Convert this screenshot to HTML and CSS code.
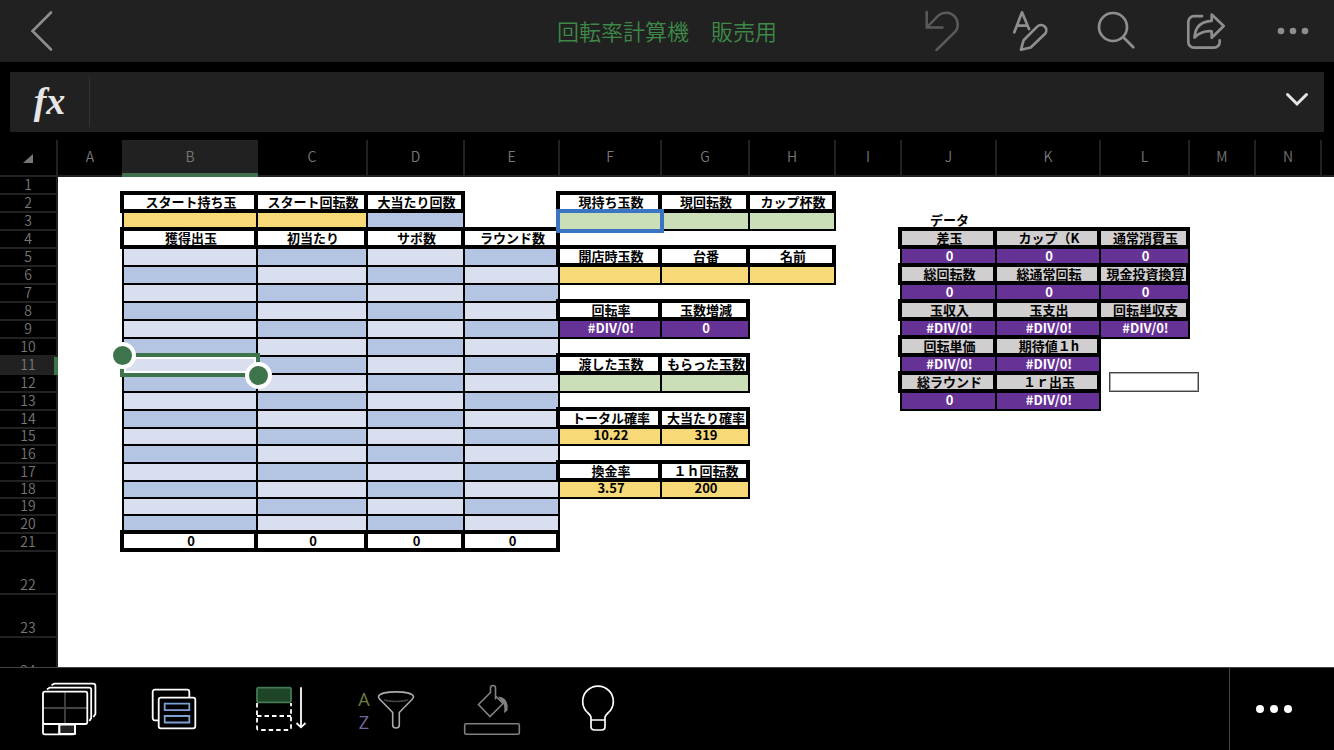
FILE: index.html
```html
<!DOCTYPE html>
<html lang="ja">
<head>
    <meta charset="UTF-8">
    <meta name="viewport" content="width=device-width, initial-scale=1.0">
    <title>回転率計算機　販売用</title>
    <link rel="stylesheet" href="styles.css">
</head>
<body>
    <header class="topbar">
        <button class="icon-btn back" aria-label="戻る">
            <svg width="44" height="44" fill="none" stroke="currentColor" stroke-width="2.6" stroke-linecap="round"><path d="M32 3.5L13.5 22L32 40.5"/></svg>
        </button>
        <h1>回転率計算機　販売用</h1>
        <nav class="actions">
            <button class="icon-btn" aria-label="元に戻す" disabled>
                <svg width="44" height="44" fill="none" stroke="currentColor" stroke-width="2.5" stroke-linecap="round"><path d="M7.7 3v15.5h15.8M7.7 18.5L19.5 6.4A11.75 11.75 0 0 1 36 23L17.5 41"/></svg>
            </button>
            <button class="icon-btn" aria-label="書式">
                <svg width="44" height="44" fill="none" stroke="currentColor" stroke-width="2.7" stroke-linecap="round" stroke-linejoin="round"><path d="M7.3 23.3L15 3.3L22 20M10.3 16.7h9.5M14 40.7L16.6 31.2L30.2 17.6a5.2 5.2 0 0 1 7.6 7.4L23.7 38.5z"/></svg>
            </button>
            <button class="icon-btn" aria-label="検索">
                <svg width="44" height="44" fill="none" stroke="currentColor" stroke-width="2.7" stroke-linecap="round"><circle cx="18" cy="18" r="14"/><path d="M28.3 28.3l10 10"/></svg>
            </button>
            <button class="icon-btn" aria-label="共有">
                <svg width="44" height="44" fill="none" stroke="currentColor" stroke-width="2.7" stroke-linecap="round" stroke-linejoin="round"><path d="M19 7.2h-8a5.7 5.7 0 0 0-5.7 5.7v20a5.7 5.7 0 0 0 5.7 5.7h20a5.7 5.7 0 0 0 5.7-5.7v-1.5M28.7 5.5L40.7 17L28.7 28.7V22.3q-9.7-1-17.2 6.2q1-16 17.2-16.7z"/></svg>
            </button>
            <button class="icon-btn" aria-label="その他">
                <svg width="44" height="44" fill="currentColor"><circle cx="10" cy="22" r="3.3"/><circle cx="22" cy="22" r="3.3"/><circle cx="34" cy="22" r="3.3"/></svg>
            </button>
        </nav>
    </header>

    <div class="formula">
        <label for="formula-input">fx</label>
        <input type="text" id="formula-input">
        <button class="icon-btn" aria-label="展開">
            <svg width="44" height="44" fill="none" stroke="currentColor" stroke-width="3" stroke-linecap="round"><path d="M12.500 14.500l9.500 9.500 9.500-9.500"/></svg>
        </button>
    </div>

    <main class="sheet">
        <table>
            <colgroup>
                <col class="w-head"><col class="w-a"><col class="w-b"><col class="w-c"><col class="w-d"><col class="w-e"><col class="w-f"><col class="w-g"><col class="w-h"><col class="w-i"><col class="w-j"><col class="w-k"><col class="w-l"><col class="w-m"><col class="w-n"><col>
            </colgroup>
            <thead>
                <tr>
                    <th class="corner"><svg width="10" height="9" fill="currentColor"><path d="M10 0v9H0z"/></svg></th>
                    <th>A</th><th class="active">B</th><th>C</th><th>D</th><th>E</th><th>F</th><th>G</th><th>H</th><th>I</th><th>J</th><th>K</th><th>L</th><th>M</th><th>N</th><th></th>
                </tr>
            </thead>
            <tbody>
                <tr><th>1</th><td colspan="15"></td></tr>
                <tr><th>2</th><td></td>
                    <td class="label">スタート持ち玉</td><td class="label">スタート回転数</td><td class="label">大当たり回数</td><td></td>
                    <td class="label">現持ち玉数</td><td class="label">現回転数</td><td class="label">カップ杯数</td><td colspan="7"></td></tr>
                <tr><th>3</th><td></td>
                    <td class="cell yellow"></td><td class="cell yellow"></td><td class="cell log"></td><td></td>
                    <td class="cell green"><div class="cursor"></div></td><td class="cell green"></td><td class="cell green"></td><td></td>
                    <td>データ</td><td colspan="5"></td></tr>
                <tr><th>4</th><td></td>
                    <td class="label">獲得出玉</td><td class="label">初当たり</td><td class="label">サポ数</td><td class="label">ラウンド数</td><td colspan="4"></td>
                    <td class="label gray">差玉</td><td class="label gray">カップ（K</td><td class="label gray">通常消費玉</td><td colspan="3"></td></tr>
                <tr><th>5</th><td></td>
                    <td class="cell log"></td><td class="cell log"></td><td class="cell log"></td><td class="cell log"></td>
                    <td class="label">開店時玉数</td><td class="label">台番</td><td class="label">名前</td><td></td>
                    <td class="cell purple">0</td><td class="cell purple">0</td><td class="cell purple">0</td><td colspan="3"></td></tr>
                <tr><th>6</th><td></td>
                    <td class="cell log"></td><td class="cell log"></td><td class="cell log"></td><td class="cell log"></td>
                    <td class="cell yellow"></td><td class="cell yellow"></td><td class="cell yellow"></td><td></td>
                    <td class="label gray">総回転数</td><td class="label gray">総通常回転</td><td class="label gray">現金投資換算</td><td colspan="3"></td></tr>
                <tr><th>7</th><td></td>
                    <td class="cell log"></td><td class="cell log"></td><td class="cell log"></td><td class="cell log"></td><td colspan="4"></td>
                    <td class="cell purple">0</td><td class="cell purple">0</td><td class="cell purple">0</td><td colspan="3"></td></tr>
                <tr><th>8</th><td></td>
                    <td class="cell log"></td><td class="cell log"></td><td class="cell log"></td><td class="cell log"></td>
                    <td class="label">回転率</td><td class="label">玉数増減</td><td colspan="2"></td>
                    <td class="label gray">玉収入</td><td class="label gray">玉支出</td><td class="label gray">回転単収支</td><td colspan="3"></td></tr>
                <tr><th>9</th><td></td>
                    <td class="cell log"></td><td class="cell log"></td><td class="cell log"></td><td class="cell log"></td>
                    <td class="cell purple">#DIV/0!</td><td class="cell purple">0</td><td colspan="2"></td>
                    <td class="cell purple">#DIV/0!</td><td class="cell purple">#DIV/0!</td><td class="cell purple">#DIV/0!</td><td colspan="3"></td></tr>
                <tr><th>10</th><td></td>
                    <td class="cell log"></td><td class="cell log"></td><td class="cell log"></td><td class="cell log"></td><td colspan="4"></td>
                    <td class="label gray">回転単価</td><td class="label gray">期待値１h</td><td colspan="4"></td></tr>
                <tr><th class="active">11</th><td></td>
                    <td class="cell log"><div class="selection"></div></td><td class="cell log"></td><td class="cell log"></td><td class="cell log"></td>
                    <td class="label">渡した玉数</td><td class="label">もらった玉数</td><td colspan="2"></td>
                    <td class="cell purple">#DIV/0!</td><td class="cell purple">#DIV/0!</td><td colspan="4"></td></tr>
                <tr><th>12</th><td></td>
                    <td class="cell log"></td><td class="cell log"></td><td class="cell log"></td><td class="cell log"></td>
                    <td class="cell green"></td><td class="cell green"></td><td colspan="2"></td>
                    <td class="label gray">総ラウンド</td><td class="label gray">１ｒ出玉</td>
                    <td><input type="text" class="box" aria-label="テキストボックス"></td><td colspan="3"></td></tr>
                <tr><th>13</th><td></td>
                    <td class="cell log"></td><td class="cell log"></td><td class="cell log"></td><td class="cell log"></td><td colspan="4"></td>
                    <td class="cell purple">0</td><td class="cell purple">#DIV/0!</td><td colspan="4"></td></tr>
                <tr><th>14</th><td></td>
                    <td class="cell log"></td><td class="cell log"></td><td class="cell log"></td><td class="cell log"></td>
                    <td class="label">トータル確率</td><td class="label">大当たり確率</td><td colspan="8"></td></tr>
                <tr class="short"><th>15</th><td></td>
                    <td class="cell log"></td><td class="cell log"></td><td class="cell log"></td><td class="cell log"></td>
                    <td class="cell yellow">10.22</td><td class="cell yellow">319</td><td colspan="8"></td></tr>
                <tr><th>16</th><td></td>
                    <td class="cell log"></td><td class="cell log"></td><td class="cell log"></td><td class="cell log"></td><td colspan="10"></td></tr>
                <tr><th>17</th><td></td>
                    <td class="cell log"></td><td class="cell log"></td><td class="cell log"></td><td class="cell log"></td>
                    <td class="label">換金率</td><td class="label">１ｈ回転数</td><td colspan="8"></td></tr>
                <tr class="short"><th>18</th><td></td>
                    <td class="cell log"></td><td class="cell log"></td><td class="cell log"></td><td class="cell log"></td>
                    <td class="cell yellow">3.57</td><td class="cell yellow">200</td><td colspan="8"></td></tr>
                <tr class="short"><th>19</th><td></td>
                    <td class="cell log"></td><td class="cell log"></td><td class="cell log"></td><td class="cell log"></td><td colspan="10"></td></tr>
                <tr><th>20</th><td></td>
                    <td class="cell log"></td><td class="cell log"></td><td class="cell log"></td><td class="cell log"></td><td colspan="10"></td></tr>
                <tr><th>21</th><td></td>
                    <td class="label">0</td><td class="label">0</td><td class="label">0</td><td class="label">0</td><td colspan="10"></td></tr>
                <tr class="tall"><th>22</th><td colspan="15"></td></tr>
                <tr class="tall"><th>23</th><td colspan="15"></td></tr>
                <tr class="tall"><th>24</th><td colspan="15"></td></tr>
            </tbody>
        </table>
    </main>

    <footer class="toolbar">
        <button class="tool" aria-label="シート">
            <svg width="60" height="56" fill="none" stroke="#fff" stroke-width="1.8" stroke-linejoin="round">
                <path d="M26 11v32M4 27h44" stroke="#444"/>
                <path d="M20.3 43.5H36v9.5H20.3z" fill="#222"/>
                <rect x="4" y="10.7" width="44.3" height="32.3" rx="2"/>
                <path d="M4 42v9.5q0 1.8 1.8 1.8H34q2 0 2-1.8V43M20.3 43v10.3M8 8.5l2.500-1.800H50q2.200 0 2.200 2V37l-1.800 3M12.500 4.200l2.500-1.500H54q2.400 0 2.400 2V33l-2 3"/>
            </svg>
        </button>
        <button class="tool" aria-label="カード表示">
            <svg width="60" height="56" fill="#000" stroke="#fff" stroke-width="1.8">
                <rect x="7.7" y="8.7" width="36.6" height="30.6" rx="2"/>
                <rect x="13.7" y="16.7" width="36.6" height="30.6" rx="2"/>
                <path d="M19.7 22.7h24.6v6.500H19.700zM19.700 35h24.600v6.500H19.700z" stroke="#7d9fd3"/>
            </svg>
        </button>
        <button class="tool" aria-label="下へ挿入">
            <svg width="60" height="56" fill="none" stroke="#fff" stroke-width="1.8">
                <path d="M6 22v25q0 2 2 2h30q2 0 2-2V22M6 35h34" stroke-dasharray="4.5 3"/>
                <rect x="6" y="6.7" width="34" height="14.6" rx="1.5" fill="#1f4529" stroke="#447a54"/>
                <path d="M50 6.3v40M45.500 42l4.500 4.300 4.500-4.300"/>
            </svg>
        </button>
        <button class="tool" aria-label="並べ替えとフィルター">
            <svg width="60" height="56" fill="none" stroke="#aaa" stroke-width="1.6">
                <text x="7" y="25" class="sort-a">A</text>
                <text x="7" y="48" class="sort-z">Z</text>
                <path d="M27 19q12 3 24 0" stroke="#444"/>
                <path d="M21.5 15.5c2-6.200 33-6.200 35 0q0 1.500-1.500 3L42.300 31.500V44q0 3-3.300 3t-3.300-3V31.500L23 18.500q-1.500-1.500-1.500-3z"/>
            </svg>
        </button>
        <button class="tool" aria-label="塗りつぶし">
            <svg width="60" height="56" fill="none" stroke="#808080" stroke-width="1.6">
                <path d="M27.5 11.5L15.500 23.500L27 35.500L40 22.500L32.500 15"/>
                <path d="M27.5 12V7q0-2.500 2.500-2.500T32.500 7v11.500"/>
                <path d="M35 15.5q11 1 9.500 14l-3.500 2.500q1.500-8-2.500-11.500z" fill="#808080" stroke="none"/>
                <rect x="1.7" y="42.7" width="54.6" height="10.6" rx="1.5"/>
            </svg>
        </button>
        <button class="tool" aria-label="操作アシスト">
            <svg width="60" height="56" fill="none" stroke="#fff" stroke-width="1.7">
                <path d="M22 39v-3q-1-2.500-3.500-4.500a15.300 15.300 0 1 1 21 0Q37 33.500 36 36v3zM22 39v6.500q0 3.500 3.500 3.500h7q3.500 0 3.500-3.500V39"/>
            </svg>
        </button>
        <button class="tool more" aria-label="その他">
            <svg width="44" height="44" fill="#fff"><circle cx="8" cy="22" r="4"/><circle cx="22" cy="22" r="4"/><circle cx="36" cy="22" r="4"/></svg>
        </button>
    </footer>
</body>
</html>
```
FILE: styles.css
```css
*,
*::before,
*::after {
    box-sizing: border-box;
}

body {
    display: flex;
    flex-direction: column;
    height: 100vh;
    margin: 0;
    background-color: #000;
    color: #808080;
    font-family: "Noto Sans CJK JP", sans-serif;
    overflow: hidden;
}

button {
    display: flex;
    align-items: center;
    justify-content: center;
    padding: 0;
    border: none;
    background: none;
    color: inherit;
    cursor: pointer;
}

/* Top bar */
.topbar {
    display: grid;
    grid-template-columns: 1fr auto 1fr;
    align-items: center;
    height: 62px;
    padding: 0 19px;
    flex-shrink: 0;
    background-color: #212121;
    color: #8e8e90;
}

.topbar h1 {
    margin: 0;
    padding-bottom: 2px;
    color: #3e8948;
    font-size: 22px;
    font-weight: 350;
    line-height: 32px;
}

.icon-btn {
    width: 44px;
    height: 44px;
}

.icon-btn:disabled {
    color: #5a5a5c;
}

.actions {
    display: flex;
    justify-content: flex-end;
    gap: 44px;
}

/* Formula bar */
.formula {
    display: flex;
    align-items: center;
    height: 60px;
    margin: 10px 10px 8px;
    padding-right: 5px;
    flex-shrink: 0;
    background-color: #212121;
    color: #e6e6e6;
}

.formula label {
    width: 80px;
    height: 50px;
    border-right: 1px solid #333;
    font: italic bold 38px/48px "Liberation Serif", serif;
    text-align: center;
}

.formula input {
    flex: 1;
    height: 50px;
    padding: 0 12px;
    border: none;
    outline: none;
    background: none;
    color: inherit;
    font-size: 18px;
}

/* Sheet */
.sheet {
    flex: 1;
    min-height: 0;
    overflow: hidden;
    background-color: #fff;
}

table {
    width: 100%;
    table-layout: fixed;
    border-collapse: separate;
    border-spacing: 0;
}

.w-head { width: 58px; }
.w-a { width: 66px; }
.w-b { width: 134px; }
.w-c { width: 110px; }
.w-d { width: 97px; }
.w-e { width: 95px; }
.w-f { width: 102px; }
.w-g { width: 88px; }
.w-h { width: 86px; }
.w-i { width: 66px; }
.w-j { width: 95px; }
.w-k { width: 104px; }
.w-l { width: 89px; }
.w-m { width: 66px; }
.w-n { width: 66px; }

th {
    position: relative;
    padding: 0 0 2px;
    border-right: 2px solid #222;
    border-bottom: 2px solid #222;
    background-color: #000;
    color: #777;
    font-size: 14px;
    font-weight: 350;
    line-height: 13px;
    vertical-align: bottom;
}

thead th {
    height: 37px;
    vertical-align: middle;
}

thead th:last-child {
    border-right: none;
}

th.active {
    background-color: #212121;
}

thead th.active::after {
    content: "";
    position: absolute;
    inset: auto -2px -2px;
    height: 4px;
    background-color: #41704e;
}

tbody th.active::after {
    content: "";
    position: absolute;
    inset: 0 -2px -2px auto;
    width: 4px;
    background-color: #3d744b;
}

.corner svg {
    display: block;
    margin: 4px auto 0;
}

td {
    position: relative;
    height: 18px;
    padding: 0 0 5px;
    color: #000;
    font-size: 13px;
    font-weight: 700;
    line-height: 12px;
    text-align: center;
    white-space: nowrap;
}

.short td {
    height: 17px;
}

.tall td {
    height: 43px;
}

/* Borders run over the cell above and the cell to the left */
.cell::after {
    content: "";
    position: absolute;
    inset: -2px 0 0 -2px;
    border: 2px solid #000;
}

.label::after {
    content: "";
    position: absolute;
    z-index: 1;
    inset: -4px 0 0 -4px;
    border: 4px solid #000;
}

.yellow { background-color: #f7d978; }
.green { background-color: #cadfb8; }
.gray { background-color: #d0cece; }

.purple {
    background-color: #673296;
    color: #fff;
}

.log {
    background-color: #b4c4e3;
}

tr:nth-child(n+5):nth-child(odd) .log:nth-child(odd),
tr:nth-child(n+5):nth-child(even) .log:nth-child(even) {
    background-color: #dadfef;
}

.cursor,
.selection {
    position: absolute;
    z-index: 2;
    inset: -4px -2px -2px -4px;
    border: 4px solid #3a75c4;
}

.selection {
    border-color: #3d744b;
    box-shadow: inset 0 0 0 2px #fff;
}

/* Drag handles */
.selection::before,
.selection::after {
    content: "";
    position: absolute;
    width: 27px;
    height: 27px;
    border: 4px solid #fff;
    border-radius: 50%;
    background-color: #3d744b;
}

.selection::before {
    top: -15px;
    left: -15px;
}

.selection::after {
    right: -16px;
    bottom: -16px;
}

.box {
    position: absolute;
    top: -3px;
    left: 8px;
    width: 90px;
    height: 20px;
    border: 1px solid #444;
    outline: 1px solid #aaa;
    outline-offset: -2px;
    background-color: #fff;
}

/* Bottom toolbar */
.toolbar {
    display: flex;
    height: 83px;
    padding-left: 16px;
    flex-shrink: 0;
    border-top: 1px solid #444;
}

.tool {
    width: 106px;
}

.tool.more {
    width: 105px;
    margin-left: auto;
    padding-right: 16px;
    border-left: 1px solid #444;
}

.tool text {
    font: 18px "Open Sans", sans-serif;
    text-anchor: middle;
    stroke: none;
}

.sort-a { fill: #6c7f3c; }
.sort-z { fill: #73659c; }
```
